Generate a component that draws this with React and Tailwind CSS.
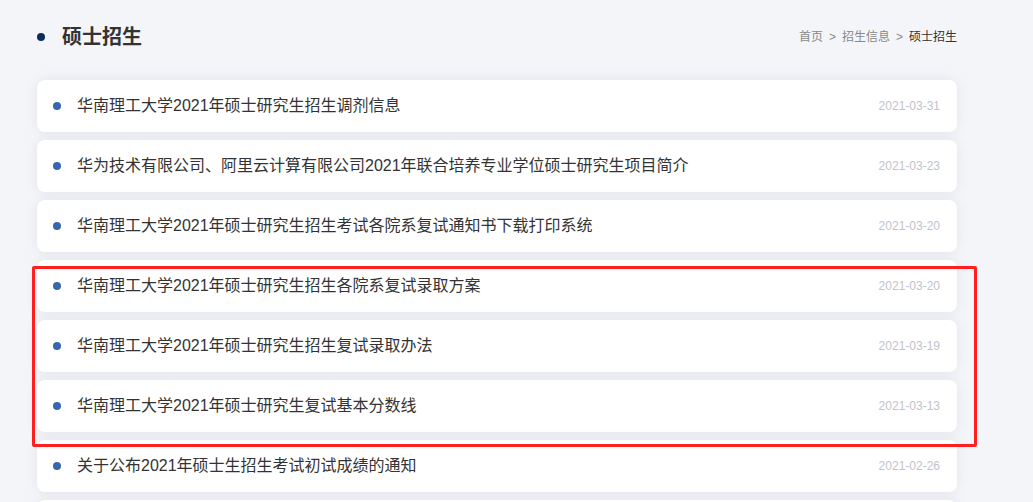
import React from "react";

const items = [
  { title: "华南理工大学2021年硕士研究生招生调剂信息", date: "2021-03-31" },
  { title: "华为技术有限公司、阿里云计算有限公司2021年联合培养专业学位硕士研究生项目简介", date: "2021-03-23" },
  { title: "华南理工大学2021年硕士研究生招生考试各院系复试通知书下载打印系统", date: "2021-03-20" },
  { title: "华南理工大学2021年硕士研究生招生各院系复试录取方案", date: "2021-03-20" },
  { title: "华南理工大学2021年硕士研究生招生复试录取办法", date: "2021-03-19" },
  { title: "华南理工大学2021年硕士研究生复试基本分数线", date: "2021-03-13" },
  { title: "关于公布2021年硕士生招生考试初试成绩的通知", date: "2021-02-26" },
];

export default function App() {
  return (
    <div
      className="h-[502px] bg-[#f4f5f9] pl-[37px] pt-[25px] overflow-hidden"
      style={{ fontFamily: '"Liberation Sans", "Noto Sans CJK SC", sans-serif' }}
    >
      <div className="w-[920px]">
        <div className="flex items-center justify-between h-[24px]">
          <div className="flex items-center">
            <span className="w-[8px] h-[8px] rounded-full bg-[#0f2d5c]" />
            <h2 className="ml-[17px] text-[20px] font-bold text-[#333] leading-none">硕士招生</h2>
          </div>
          <div className="flex items-center text-[12px] text-[#888]">
            <a href="#">首页</a>
            <span className="mx-[6px]">&gt;</span>
            <a href="#">招生信息</a>
            <span className="mx-[6px]">&gt;</span>
            <span className="text-[#333]">硕士招生</span>
          </div>
        </div>

        <div className="relative mt-[31px]">
          <ul className="flex flex-col gap-[8px]">
            {items.map((it, i) => (
              <li
                key={i}
                className="flex items-center h-[52px] bg-white rounded-[8px] pl-[16px] pr-[17px] shadow-[0_0_14px_rgba(20,30,60,0.07)]"
              >
                <span className="w-[8px] h-[8px] rounded-full bg-[#3866ad] shrink-0" />
                <span className="ml-[16px] flex-1 text-[16px] text-[#333] truncate">{it.title}</span>
                <span className="text-[12px] text-[#bfc3cb]">{it.date}</span>
              </li>
            ))}
            <li className="h-[52px] bg-white rounded-[8px] shadow-[0_0_14px_rgba(20,30,60,0.07)]" />
          </ul>
          <div className="absolute left-[-5px] top-[186px] w-[945px] h-[181px] border-[3px] border-[#ff1f1f] rounded-[2px] pointer-events-none" />
        </div>
      </div>
    </div>
  );
}
